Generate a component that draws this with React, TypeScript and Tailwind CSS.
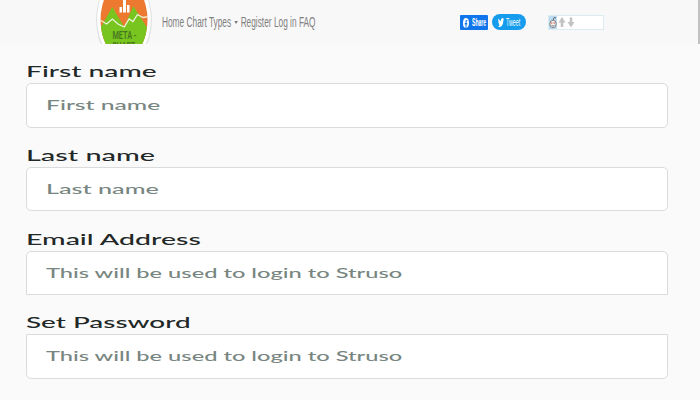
import React from "react";

type FieldProps = {
  label: string;
  placeholder: string;
  labelScale: string;
  hintScale: string;
  box: string;
};

const fields: FieldProps[] = [
  { label: "First name", placeholder: "First name", labelScale: "scale-x-[1.88]", hintScale: "scale-x-[1.76]", box: "mb-[17px] h-[45px] rounded-[5px]" },
  { label: "Last name", placeholder: "Last name", labelScale: "scale-x-[1.92]", hintScale: "scale-x-[1.8]", box: "mb-[18px] h-[44px] rounded-[5px]" },
  { label: "Email Address", placeholder: "This will be used to login to Struso", labelScale: "scale-x-[1.9]", hintScale: "scale-x-[1.69]", box: "mb-[17px] h-[44px] rounded-t-[5px]" },
  { label: "Set Password", placeholder: "This will be used to login to Struso", labelScale: "scale-x-[1.86]", hintScale: "scale-x-[1.69]", box: "h-[45px] rounded-b-[5px]" },
];

function Field({ label, placeholder, labelScale, hintScale, box }: FieldProps) {
  return (
    <div>
      <label className="flex h-[22px] items-center pb-px">
        <span className={`-ml-[0.5px] origin-left whitespace-nowrap text-[15px] leading-none font-medium text-[#222827] ${labelScale}`}>{label}</span>
      </label>
      <div className={`flex items-center border border-[#d9dbdc] bg-white pb-px pl-[18.5px] ${box}`}>
        <span className={`origin-left whitespace-nowrap text-[14px] leading-none font-medium text-[#788681] ${hintScale}`}>{placeholder}</span>
      </div>
    </div>
  );
}

function Logo() {
  return (
    <svg className="block h-[44px] w-[58px]" viewBox="0 0 58 44">
      <defs>
        <clipPath id="egg"><ellipse cx="29" cy="20" rx="23.5" ry="38" /></clipPath>
      </defs>
      <ellipse cx="29" cy="20" rx="28" ry="43" fill="#e2e3e3" />
      <ellipse cx="29" cy="19" rx="26.8" ry="42" fill="#fff" />
      <g clipPath="url(#egg)">
        <rect width="58" height="60" fill="#ec792f" />
        <path d="M2 34 L17.300 7 L29.300 27 L38.300 6 L56 34 V60 H2Z" fill="#78c51f" />
        <path d="M3 19 L6.700 21 L11.700 24 L17.300 19 L23 24 L29.300 27 L34 19 L38 21.500 L42.500 14.500 L48 17.500 L56 16" fill="none" stroke="#eef3dc" strokeWidth="1.3" />
        <path d="M24.500 7h2.500v5.500h-2.500z M28 0h3v12.500h-3z M32 5h2.500v7.500h-2.500z" fill="#fff" />
        <text x="17.500" y="39" textLength="24" lengthAdjust="spacingAndGlyphs" fontFamily="Roboto, sans-serif" fontSize="10.500" fontWeight="600" fill="#46751e">META -</text>
        <text x="17" y="50" textLength="23" lengthAdjust="spacingAndGlyphs" fontFamily="Roboto, sans-serif" fontSize="10.500" fontWeight="600" fill="#46751e">CHART</text>
      </g>
    </svg>
  );
}

export default function App() {
  return (
    <div className="h-[400px] w-[700px] overflow-hidden bg-[#fafafa] font-['Lato',sans-serif]">
      <header className="flex h-[44px] items-start overflow-hidden border-r-2 border-[#c1c1c1] bg-[#f8f8f8] pl-[95px] font-['Liberation_Sans',sans-serif]">
        <Logo />
        <nav className="ml-[9px] mt-[14px] w-[298px] text-[14px] leading-[16px] text-[#808080]">
          <div className="flex w-max origin-left scale-x-[0.593] items-center gap-1 whitespace-nowrap">
            <span>Home</span>
            <span>Chart Types</span>
            <span className="mx-px h-0 w-0 border-x-[3px] border-t-[3px] border-x-transparent border-t-[#777]" />
            <span>Register</span>
            <span>Log in</span>
            <span>FAQ</span>
          </div>
        </nav>
        <div className="mt-[15px] flex h-[15px] w-[28px] shrink-0 items-center rounded-[1px] bg-[#1176ec] pl-[3px]">
          <svg className="h-[10px] w-[6px] shrink-0" viewBox="0 0 24 24" preserveAspectRatio="none">
            <path fill="#fff" d="M24 12a12 12 0 1 0-13.900 11.900v-8.400H7.100V12h3V9.400c0-3 1.800-4.700 4.600-4.700 1.300 0 2.700.2 2.700.2v3h-1.500c-1.500 0-2 .9-2 1.900V12h3.400l-.5 3.500h-2.900v8.400A12 12 0 0 0 24 12Z" />
          </svg>
          <span className="ml-[3px] w-[14px] origin-left scale-x-[0.51] text-[10px] leading-none font-bold text-white">Share</span>
        </div>
        <div className="ml-[4px] mt-[14px] flex h-[16px] w-[34px] shrink-0 items-center rounded-full bg-[#169cec] pl-[6px]">
          <svg className="h-[9px] w-[6px] shrink-0" viewBox="0 2 24 20" preserveAspectRatio="none">
            <path fill="#fff" d="M24 4.600c-.9.400-1.800.7-2.800.8a4.900 4.900 0 0 0 2.100-2.700c-1 .6-2 1-3.100 1.200a4.900 4.900 0 0 0-8.400 4.500A14 14 0 0 1 1.700 3.100a4.900 4.900 0 0 0 1.500 6.600c-.8 0-1.600-.2-2.200-.6a4.900 4.900 0 0 0 3.900 4.900c-.7.200-1.500.2-2.200.1a4.900 4.900 0 0 0 4.600 3.400A9.900 9.900 0 0 1 0 19.500 14 14 0 0 0 21.500 7.100c1-.7 1.800-1.500 2.500-2.500Z" />
          </svg>
          <span className="ml-[2px] mt-px w-[14px] origin-left scale-x-[0.53] text-[10px] leading-none text-white">Tweet</span>
        </div>
        <div className="ml-[22px] mt-[15px] flex h-[15px] w-[56px] shrink-0 border border-[#dcebf0] bg-white">
          <svg className="h-[13px] w-[30px] shrink-0" viewBox="0 0 30 13">
            <rect width="8" height="13" fill="#bddcf3" />
            <path d="M4 5 5 1.500 7 2" fill="none" stroke="#555" strokeWidth=".8" />
            <ellipse cx="4" cy="8" rx="3.200" ry="3.800" fill="#eee" stroke="#777" strokeWidth=".9" />
            <circle cx="2.700" cy="7" r=".8" fill="#d86a4b" />
            <circle cx="5.300" cy="7" r=".8" fill="#d86a4b" />
            <path d="M2.500 9.500q1.500 1.300 3 0" fill="none" stroke="#555" strokeWidth=".7" />
            <path d="M13 1 16.500 6.500H14.300V11H11.700V6.500H9.500Z M22 11.500 18.500 6H20.700V1.500H23.300V6H25.500Z" fill="#c3c3c3" />
          </svg>
        </div>
      </header>
      <main className="ml-[26px] w-[642px] pt-[17px]">
        {fields.map((field) => (
          <Field key={field.label} {...field} />
        ))}
      </main>
    </div>
  );
}
